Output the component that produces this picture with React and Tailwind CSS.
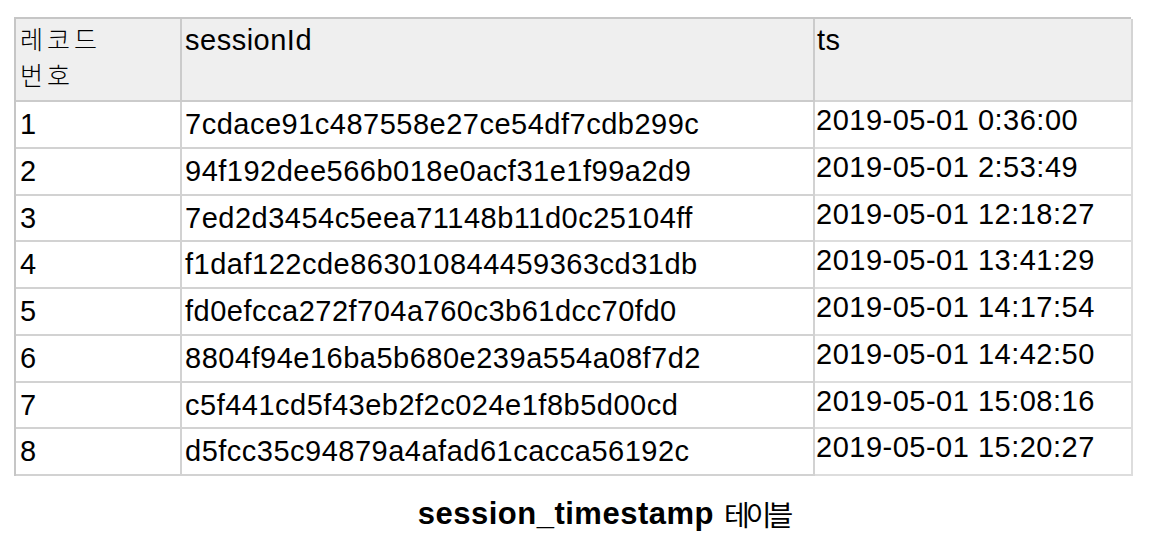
import React from 'react';

const rows = [
  ['1', '7cdace91c487558e27ce54df7cdb299c', '2019-05-01 0:36:00'],
  ['2', '94f192dee566b018e0acf31e1f99a2d9', '2019-05-01 2:53:49'],
  ['3', '7ed2d3454c5eea71148b11d0c25104ff', '2019-05-01 12:18:27'],
  ['4', 'f1daf122cde863010844459363cd31db', '2019-05-01 13:41:29'],
  ['5', 'fd0efcca272f704a760c3b61dcc70fd0', '2019-05-01 14:17:54'],
  ['6', '8804f94e16ba5b680e239a554a08f7d2', '2019-05-01 14:42:50'],
  ['7', 'c5f441cd5f43eb2f2c024e1f8b5d00cd', '2019-05-01 15:08:16'],
  ['8', 'd5fcc35c94879a4afad61cacca56192c', '2019-05-01 15:20:27'],
]

const latin = "font-['Liberation_Sans',Arial,sans-serif]"
const korean = "font-['Noto_Sans_CJK_KR','Noto_Sans',sans-serif]"

const App = () => {
  return (
    <div className="w-[1157px] h-[557px] bg-white text-black overflow-hidden">
      <div className="ml-[14px] mt-[17px] w-[1117px] border-t-2 border-l-2 border-[#c6c6c6]">
        <div className="grid grid-cols-[166px_633px_318px]">
          {/* header */}
          <div className={`h-[83px] bg-[#efefef] border-r-2 border-b-2 border-[#cbcbcb] pl-[4px] pt-[1px] text-[25px] leading-[36px] font-light tracking-[4px] ${korean}`}>
            <div>레코드</div>
            <div>번호</div>
          </div>
          <div className={`h-[83px] bg-[#efefef] border-r-2 border-b-2 border-[#cbcbcb] pl-[3px] pt-[5px] text-[29px] leading-[33px] tracking-[0.5px] ${latin}`}>
            sessionId
          </div>
          <div className={`h-[83px] bg-[#efefef] border-r-2 border-b-2 border-[#d4d4d4] pl-[2px] pt-[5px] text-[29px] leading-[33px] tracking-[0.5px] ${latin}`}>
            ts
          </div>

          {rows.map((row) => (
            <React.Fragment key={row[0]}>
              <div className={`h-[46.75px] border-r-2 border-b-2 border-[#d2d2d2] pl-[4px] pt-[6px] text-[29px] leading-[33px] tracking-[0.5px] ${latin}`}>
                {row[0]}
              </div>
              <div className={`h-[46.75px] border-r-2 border-b-2 border-[#d2d2d2] pl-[3px] pt-[6px] text-[29px] leading-[33px] tracking-[0.5px] ${latin}`}>
                {row[1]}
              </div>
              <div className={`h-[46.75px] border-r-2 border-b-2 border-[#dddddd] pl-[1px] pt-[2px] text-[29px] leading-[33px] tracking-[0.5px] ${latin}`}>
                {row[2]}
              </div>
            </React.Fragment>
          ))}
        </div>
      </div>

      <div className="w-[1157px] pl-[50px] mt-[18px] flex justify-center items-center h-[40px]">
        <span className={`text-[31px] font-bold tracking-[0.5px] ${latin}`}>session_timestamp</span>
        <span className={`ml-[10px] text-[28px] tracking-[-4px] ${korean}`}>테이블</span>
      </div>
    </div>
  )
}

export default App
